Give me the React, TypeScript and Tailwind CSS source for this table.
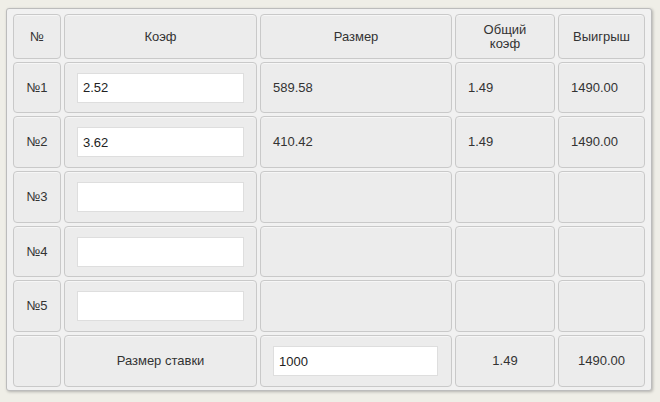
import React from 'react';

const rows = [
  { n: '№1', koef: '2.52', size: '589.58', total: '1.49', win: '1490.00' },
  { n: '№2', koef: '3.62', size: '410.42', total: '1.49', win: '1490.00' },
  { n: '№3', koef: '', size: '', total: '', win: '' },
  { n: '№4', koef: '', size: '', total: '', win: '' },
  { n: '№5', koef: '', size: '', total: '', win: '' },
];

const cell = 'bg-[#ececec] border border-[#c9c9c9] rounded-[4px] shadow-[inset_0_1px_0_#f6f6f6] flex items-center';

function Input({ value, className }: { value: string; className: string }) {
  return (
    <input
      defaultValue={value}
      className={`h-[30px] bg-white border border-[#dedede] px-[5px] text-[13px] text-[#222] outline-none ${className}`}
    />
  );
}

export default function App() {
  return (
    <div className="w-[660px] h-[402px] bg-[#efeee7] pt-[8px] pl-[6px] font-['Liberation_Sans',Arial,sans-serif] text-[13px] text-[#333]">
      <div className="w-[646px] h-[383px] bg-[#f1f1f1] border border-[#bcbcbc] rounded-[3px] shadow-[1px_1px_3px_rgba(0,0,0,0.25)] pt-[5px] pl-[6px]">
        <div className="grid grid-cols-[48px_193px_192px_100px_87px] grid-rows-[45px_51px_52px_52px_51px_52px_52px] gap-[3px]">
          <div className={`${cell} justify-center`}>№</div>
          <div className={`${cell} justify-center`}>Коэф</div>
          <div className={`${cell} justify-center`}>Размер</div>
          <div className={`${cell} justify-center text-center leading-[14px]`}>Общий<br />коэф</div>
          <div className={`${cell} justify-center`}>Выигрыш</div>

          {rows.map((r) => (
            <React.Fragment key={r.n}>
              <div className={`${cell} justify-center`}>{r.n}</div>
              <div className={`${cell} pl-[12px]`}>
                <Input value={r.koef} className="w-[167px]" />
              </div>
              <div className={`${cell} pl-[12px]`}>{r.size}</div>
              <div className={`${cell} pl-[12px]`}>{r.total}</div>
              <div className={`${cell} pl-[12px]`}>{r.win}</div>
            </React.Fragment>
          ))}

          <div className={cell}></div>
          <div className={`${cell} justify-center`}>Размер ставки</div>
          <div className={`${cell} pl-[12px]`}>
            <Input value="1000" className="w-[165px]" />
          </div>
          <div className={`${cell} justify-center`}>1.49</div>
          <div className={`${cell} justify-center`}>1490.00</div>
        </div>
      </div>
    </div>
  );
}
